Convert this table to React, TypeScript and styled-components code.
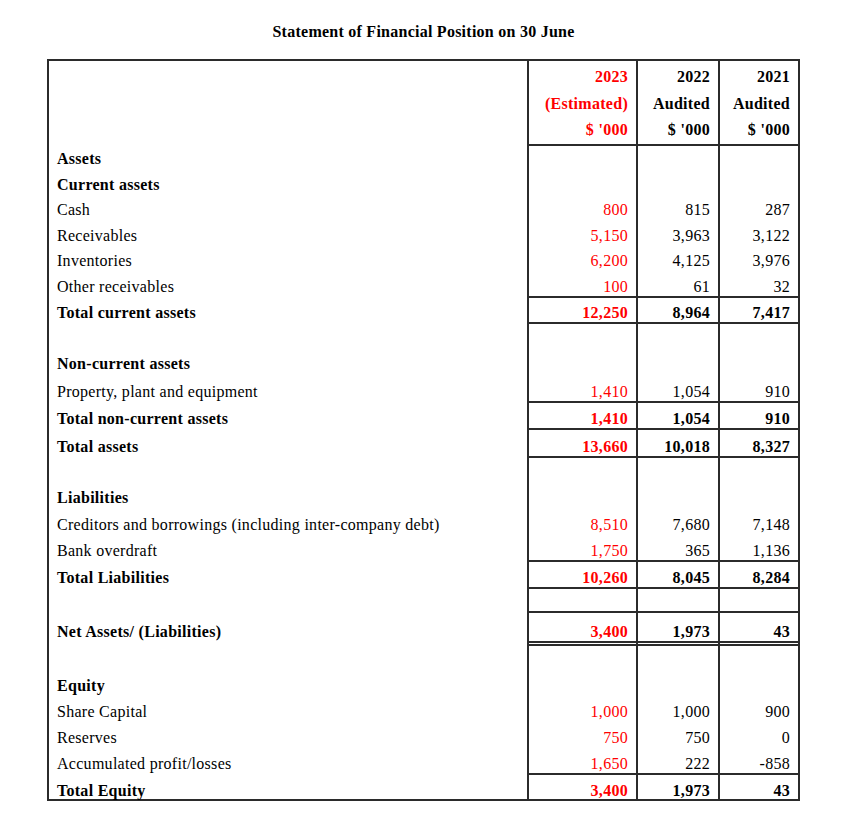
import React from 'react';
import styled, { createGlobalStyle } from 'styled-components';

const Global = createGlobalStyle`
  html, body { margin: 0; padding: 0; background: #fff; }
  body { font-family: "Liberation Serif", "Times New Roman", serif; color: #000; }
`;

const Page = styled.div`
  width: 859px;
  min-height: 833px;
  padding-left: 47px;
  box-sizing: border-box;
`;

const Title = styled.h1`
  margin: 0;
  width: 753px;
  height: 59px;
  box-sizing: border-box;
  padding-top: 23px;
  font-size: 16px;
  letter-spacing: 0.25px;
  line-height: 18px;
  font-weight: bold;
  text-align: center;
`;

const Table = styled.div`
  width: 753px;
  box-sizing: border-box;
  border: 2px solid #2b2b2b;
  display: flex;
  flex-direction: column;
`;

const Row = styled.div<{ $h: number }>`
  display: grid;
  grid-template-columns: 478px 109px 82px 80px;
  height: ${(p) => p.$h}px;
  font-size: 16px;
  letter-spacing: 0.28px;
`;

const Label = styled.div<{ $bold?: boolean; $pt: number }>`
  padding: ${(p) => p.$pt}px 0 0 8px;
  line-height: 18px;
  font-weight: ${(p) => (p.$bold ? 'bold' : 'normal')};
  white-space: nowrap;
`;

const Num = styled.div<{ $bold?: boolean; $red?: boolean; $rule?: 'single' | 'double'; $pt: number }>`
  box-sizing: border-box;
  border-left: 2px solid #2b2b2b;
  border-bottom: ${(p) =>
    p.$rule === 'double' ? '5px double #2b2b2b' : p.$rule === 'single' ? '2px solid #2b2b2b' : 'none'};
  padding: ${(p) => p.$pt}px 8px 0 0;
  text-align: right;
  line-height: 18px;
  font-weight: ${(p) => (p.$bold ? 'bold' : 'normal')};
  color: ${(p) => (p.$red ? '#ff0000' : '#000')};
  white-space: nowrap;
`;

const HeadCell = styled.div<{ $red?: boolean }>`
  box-sizing: border-box;
  border-left: 2px solid #2b2b2b;
  border-bottom: 2px solid #2b2b2b;
  padding: 3px 8px 0 0;
  text-align: right;
  line-height: 26.5px;
  font-weight: bold;
  color: ${(p) => (p.$red ? '#ff0000' : '#000')};
  white-space: nowrap;
`;

type Kind = 'head' | 'item' | 'total' | 'blank';
type RowDef = {
  label?: string;
  kind: Kind;
  v?: [string, string, string];
  h: number;
  rule?: 'single' | 'double';
};

const rows: RowDef[] = [
  { label: 'Assets', kind: 'head', h: 25.5 },
  { label: 'Current assets', kind: 'head', h: 25.5 },
  { label: 'Cash', kind: 'item', v: ['800', '815', '287'], h: 25.5 },
  { label: 'Receivables', kind: 'item', v: ['5,150', '3,963', '3,122'], h: 25.5 },
  { label: 'Inventories', kind: 'item', v: ['6,200', '4,125', '3,976'], h: 25.5 },
  { label: 'Other receivables', kind: 'item', v: ['100', '61', '32'], h: 25.5, rule: 'single' },
  { label: 'Total current assets', kind: 'total', v: ['12,250', '8,964', '7,417'], h: 28, rule: 'single' },
  { kind: 'blank', h: 24 },
  { label: 'Non-current assets', kind: 'head', h: 28 },
  { label: 'Property, plant and equipment', kind: 'item', v: ['1,410', '1,054', '910'], h: 26, rule: 'single' },
  { label: 'Total non-current assets', kind: 'total', v: ['1,410', '1,054', '910'], h: 28, rule: 'single' },
  { label: 'Total assets', kind: 'total', v: ['13,660', '10,018', '8,327'], h: 28, rule: 'single' },
  { kind: 'blank', h: 24 },
  { label: 'Liabilities', kind: 'head', h: 27 },
  { label: 'Creditors and borrowings (including inter-company debt)', kind: 'item', v: ['8,510', '7,680', '7,148'], h: 26 },
  { label: 'Bank overdraft', kind: 'item', v: ['1,750', '365', '1,136'], h: 26, rule: 'single' },
  { label: 'Total Liabilities', kind: 'total', v: ['10,260', '8,045', '8,284'], h: 28, rule: 'single' },
  { kind: 'blank', h: 26, rule: 'single' },
  { label: 'Net Assets/ (Liabilities)', kind: 'total', v: ['3,400', '1,973', '43'], h: 30, rule: 'double' },
  { kind: 'blank', h: 25 },
  { label: 'Equity', kind: 'head', h: 26 },
  { label: 'Share Capital', kind: 'item', v: ['1,000', '1,000', '900'], h: 26 },
  { label: 'Reserves', kind: 'item', v: ['750', '750', '0'], h: 26 },
  { label: 'Accumulated profit/losses', kind: 'item', v: ['1,650', '222', '-858'], h: 26, rule: 'single' },
  { label: 'Total Equity', kind: 'total', v: ['3,400', '1,973', '43'], h: 27 },
];

export default function App() {
  return (
    <>
      <Global />
      <Page>
        <Title>Statement of Financial Position on 30 June</Title>
        <Table>
          <Row $h={80}>
            <div />
            <HeadCell $red>
              2023
              <br />
              (Estimated)
              <br />$ '000
            </HeadCell>
            <HeadCell>
              2022
              <br />
              Audited
              <br />$ '000
            </HeadCell>
            <HeadCell>
              2021
              <br />
              Audited
              <br />$ '000
            </HeadCell>
          </Row>
          {rows.map((r, i) => {
            const bold = r.kind === 'head' || r.kind === 'total';
            const pt = r.kind === 'total' ? 10 : 9;
            return (
              <Row key={i} $h={r.h}>
                <Label $bold={bold} $pt={pt}>
                  {r.label ?? ''}
                </Label>
                {[0, 1, 2].map((c) => (
                  <Num key={c} $red={c === 0} $bold={r.kind === 'total'} $rule={r.rule} $pt={pt}>
                    {r.v ? r.v[c] : ''}
                  </Num>
                ))}
              </Row>
            );
          })}
        </Table>
      </Page>
    </>
  );
}
